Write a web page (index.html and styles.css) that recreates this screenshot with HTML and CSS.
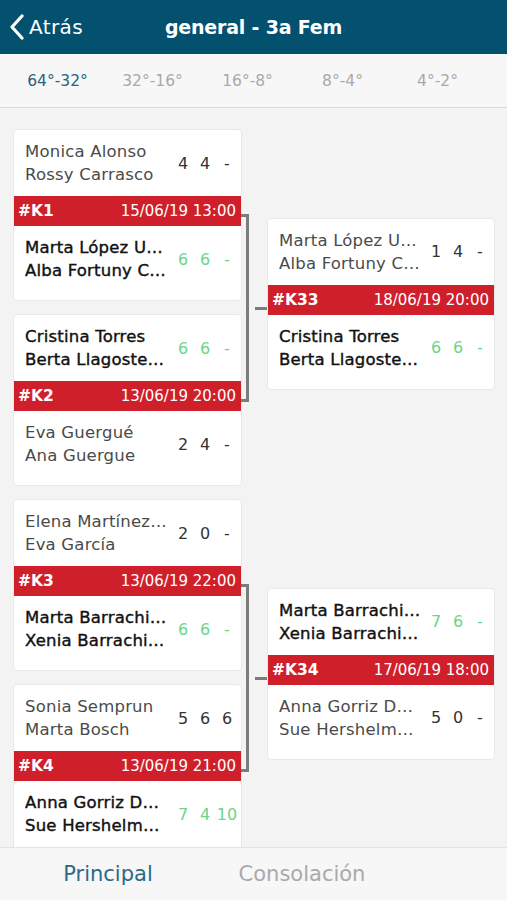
FILE: index.html
```html
<!DOCTYPE html>
<html lang="es">
<head>
    <meta charset="UTF-8">
    <meta name="viewport" content="width=device-width, initial-scale=1.0">
    <title>general - 3a Fem</title>
    <link rel="stylesheet" href="styles.css">
</head>
<body>

<header class="topbar">
    <a class="back" href="#">
        <svg width="16" height="26" viewBox="0 0 16 26"><path d="M13 2 L3 13 L13 24" fill="none" stroke="#fff" stroke-width="3.2" stroke-linecap="round" stroke-linejoin="round"/></svg>
        Atrás
    </a>
    <h1>general - 3a Fem</h1>
</header>

<nav class="rounds">
    <a class="activo" href="#">64°-32°</a>
    <a href="#">32°-16°</a>
    <a href="#">16°-8°</a>
    <a href="#">8°-4°</a>
    <a href="#">4°-2°</a>
</nav>

<main class="cuadro">

    <div class="par">
        <div class="col">
            <div class="partido">
                <div class="equipo">
                    <div class="nombres"><span>Monica Alonso</span><span>Rossy Carrasco</span></div>
                    <div class="sets"><span>4</span><span>4</span><span>-</span></div>
                </div>
                <div class="barra"><b>#K1</b><span>15/06/19 13:00</span></div>
                <div class="equipo ganador">
                    <div class="nombres"><span>Marta López U…</span><span>Alba Fortuny C…</span></div>
                    <div class="sets"><span>6</span><span>6</span><span>-</span></div>
                </div>
            </div>
            <div class="partido">
                <div class="equipo ganador">
                    <div class="nombres"><span>Cristina Torres</span><span>Berta Llagoste…</span></div>
                    <div class="sets"><span>6</span><span>6</span><span>-</span></div>
                </div>
                <div class="barra"><b>#K2</b><span>13/06/19 20:00</span></div>
                <div class="equipo">
                    <div class="nombres"><span>Eva Guergué</span><span>Ana Guergue</span></div>
                    <div class="sets"><span>2</span><span>4</span><span>-</span></div>
                </div>
            </div>
        </div>
        <div class="conector"><div class="llave"></div><div class="linea"></div></div>
        <div class="col siguiente">
            <div class="partido">
                <div class="equipo">
                    <div class="nombres"><span>Marta López U…</span><span>Alba Fortuny C…</span></div>
                    <div class="sets"><span>1</span><span>4</span><span>-</span></div>
                </div>
                <div class="barra"><b>#K33</b><span>18/06/19 20:00</span></div>
                <div class="equipo ganador">
                    <div class="nombres"><span>Cristina Torres</span><span>Berta Llagoste…</span></div>
                    <div class="sets"><span>6</span><span>6</span><span>-</span></div>
                </div>
            </div>
        </div>
    </div>

    <div class="par">
        <div class="col">
            <div class="partido">
                <div class="equipo">
                    <div class="nombres"><span>Elena Martínez…</span><span>Eva García</span></div>
                    <div class="sets"><span>2</span><span>0</span><span>-</span></div>
                </div>
                <div class="barra"><b>#K3</b><span>13/06/19 22:00</span></div>
                <div class="equipo ganador">
                    <div class="nombres"><span>Marta Barrachi…</span><span>Xenia Barrachi…</span></div>
                    <div class="sets"><span>6</span><span>6</span><span>-</span></div>
                </div>
            </div>
            <div class="partido">
                <div class="equipo">
                    <div class="nombres"><span>Sonia Semprun</span><span>Marta Bosch</span></div>
                    <div class="sets"><span>5</span><span>6</span><span>6</span></div>
                </div>
                <div class="barra"><b>#K4</b><span>13/06/19 21:00</span></div>
                <div class="equipo ganador">
                    <div class="nombres"><span>Anna Gorriz D…</span><span>Sue Hershelm…</span></div>
                    <div class="sets"><span>7</span><span>4</span><span>10</span></div>
                </div>
            </div>
        </div>
        <div class="conector"><div class="llave"></div><div class="linea"></div></div>
        <div class="col siguiente">
            <div class="partido">
                <div class="equipo ganador">
                    <div class="nombres"><span>Marta Barrachi…</span><span>Xenia Barrachi…</span></div>
                    <div class="sets"><span>7</span><span>6</span><span>-</span></div>
                </div>
                <div class="barra"><b>#K34</b><span>17/06/19 18:00</span></div>
                <div class="equipo">
                    <div class="nombres"><span>Anna Gorriz D…</span><span>Sue Hershelm…</span></div>
                    <div class="sets"><span>5</span><span>0</span><span>-</span></div>
                </div>
            </div>
        </div>
    </div>

</main>

<nav class="cuadros">
    <a class="activo" href="#">Principal</a>
    <a href="#">Consolación</a>
</nav>

</body>
</html>
```

FILE: styles.css
```css
body {
    font-family: "DejaVu Sans", sans-serif;
    margin: 0;
    padding: 0;
    background-color: #f3f3f3;
    height: 100vh;
    display: flex;
    flex-direction: column;
    overflow: hidden;
}

a {
    text-decoration: none;
}

/* cabecera */
.topbar {
    background-color: #04506f;
    color: white;
    height: 54px;
    flex-shrink: 0;
    display: flex;
    align-items: center;
    justify-content: center;
    position: relative;
}

.topbar h1 {
    margin: 0;
    font-size: 19px;
    font-weight: 600;
    letter-spacing: -0.2px;
}

.back {
    position: absolute;
    left: 9px;
    top: 14px;
    color: white;
    font-size: 20px;
    letter-spacing: 0.4px;
    display: flex;
    align-items: center;
    gap: 4px;
}

/* rondas */
.rounds {
    background-color: #f7f7f7;
    border-bottom: 1px solid #dcdcdc;
    height: 53px;
    flex-shrink: 0;
    display: flex;
    align-items: center;
    padding-left: 10px;
}

.rounds a {
    width: 95px;
    text-align: center;
    color: #a9a9a9;
    font-size: 15.5px;
}

.rounds a.activo {
    color: #2a6283;
}

/* cuadro */
.cuadro {
    flex: 1;
    overflow: hidden;
    padding: 22px 13px 0 14px;
    display: flex;
    flex-direction: column;
    gap: 15px;
}

.par {
    display: flex;
}

.col {
    width: 227px;
    display: flex;
    flex-direction: column;
    gap: 15px;
}

.col.siguiente {
    width: 226px;
    justify-content: center;
    padding-bottom: 8px;
}

.conector {
    width: 27px;
    display: flex;
    align-items: center;
    padding: 84px 0 83px;
}

.llave {
    align-self: stretch;
    width: 8px;
    box-sizing: border-box;
    border: 3px solid #7c7c7c;
    border-left: none;
}

.linea {
    width: 13px;
    height: 3px;
    margin-left: 6px;
    background: #7c7c7c;
}

.partido {
    background: white;
    border-radius: 4px;
    box-shadow: 0 0 0 1px #e8e8e8;
    padding-bottom: 8px;
    flex-shrink: 0;
}

.equipo {
    height: 66px;
    display: flex;
    align-items: center;
    padding: 0 3px 0 11px;
    color: #4a4a4a;
}

.nombres {
    flex: 1;
    min-width: 0;
    padding-right: 2px;
    font-size: 16.5px;
    letter-spacing: 0.2px;
    line-height: 23px;
}

.nombres span {
    display: block;
    white-space: nowrap;
    overflow: hidden;
}

.ganador .nombres {
    color: #111;
    -webkit-text-stroke: 0.4px #111;
}

.sets {
    display: flex;
    font-size: 16px;
    color: #333;
}

.sets span {
    width: 22px;
    text-align: center;
}

.ganador .sets {
    color: #6cd58a;
}

.barra {
    background: #cf1f2b;
    color: white;
    height: 30px;
    display: flex;
    align-items: center;
    justify-content: space-between;
    padding: 0 5px 0 4px;
    font-size: 15px;
}

.barra b {
    font-weight: 600;
    font-size: 15.5px;
}

/* pie */
.cuadros {
    background-color: #f7f7f7;
    border-top: 1px solid #e2e2e2;
    height: 52px;
    flex-shrink: 0;
    display: flex;
    align-items: center;
    padding-left: 11px;
}

.cuadros a {
    width: 194px;
    text-align: center;
    color: #aaa;
    font-size: 21px;
}

.cuadros a.activo {
    color: #2b6a86;
}
```
